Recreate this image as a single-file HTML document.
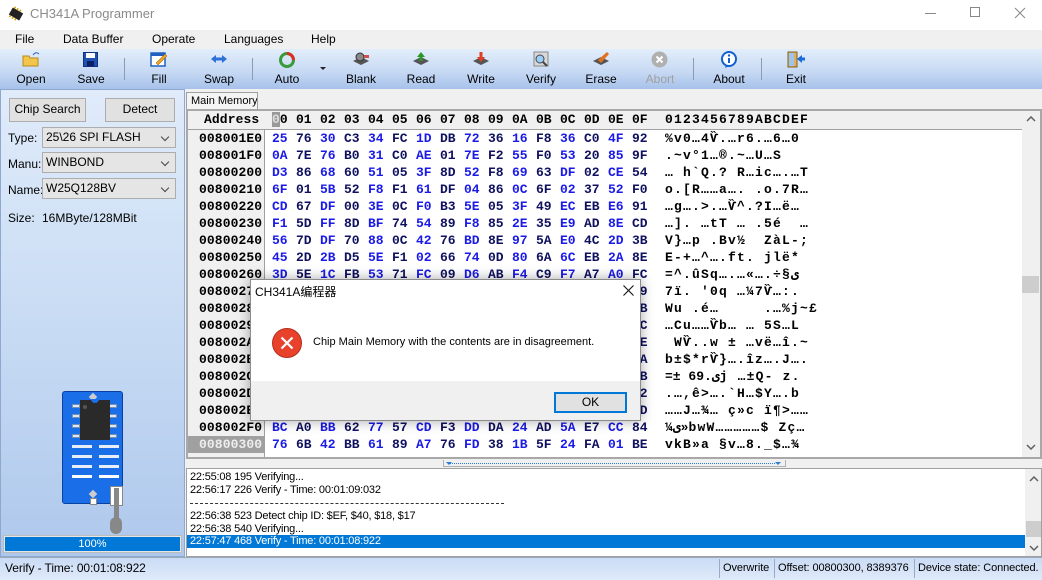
<!DOCTYPE html>
<html><head><meta charset="utf-8"><style>
*{box-sizing:border-box;margin:0;padding:0}
body{width:1042px;height:580px;overflow:hidden;position:relative;background:#f0f0f0;font-family:"Liberation Sans","Noto Sans CJK SC",sans-serif;font-size:12px;color:#000}
.a{position:absolute;white-space:nowrap}
.tb{text-align:center;width:60px;font-size:12px}
.sep{position:absolute;top:58px;width:1px;height:22px;background:#8a9bb5}
.mono{font-family:"Liberation Mono",monospace;font-weight:bold;font-size:13px}
.row{position:absolute;left:186px;height:17px;line-height:17px;white-space:pre}
.ad{position:absolute;left:13px;width:66px;letter-spacing:0.1px}
.hx{position:absolute;left:86px}
.hx span{display:inline-block;width:24px}
.b{color:#1a1ae8}.d{color:#101060}
.as{position:absolute;left:479px;letter-spacing:1.2px;color:#000}
.combo{position:absolute;left:42px;width:134px;height:21px;background:#e5e5e5;border:1px solid #adadad;padding-left:3px;line-height:19px;font-size:12px}
.combo:after{content:"";position:absolute;right:7px;top:6px;width:5px;height:5px;border-right:1px solid #444;border-bottom:1px solid #444;transform:rotate(45deg)}
.btn{position:absolute;background:#e1e1e1;border:1px solid #adadad;text-align:center;line-height:21px;font-size:12px}
.pin{position:absolute;width:8px;height:4px;background:#dfe8f5;border:1px solid #7890b0}
.slot{position:absolute;width:20px;height:3px;background:#e8eef8}
.log{position:absolute;left:190px;font-size:11px;line-height:13px;letter-spacing:-0.2px;white-space:nowrap}
.st{font-size:11px;letter-spacing:-0.1px}
</style></head><body>
<div class="a" style="left:0;top:0;width:1042px;height:30px;background:#fff"></div>
<svg class="a" style="left:7px;top:6px" width="18" height="16"><g transform="rotate(30 9 8)"><rect x="3" y="4" width="12" height="8" fill="#222"/><g stroke="#c9a400" stroke-width="1.5"><line x1="5" y1="2" x2="5" y2="4"/><line x1="8" y1="2" x2="8" y2="4"/><line x1="11" y1="2" x2="11" y2="4"/><line x1="5" y1="12" x2="5" y2="14"/><line x1="8" y1="12" x2="8" y2="14"/><line x1="11" y1="12" x2="11" y2="14"/></g></g></svg>
<div class="a" style="left:30px;top:6px;font-size:13px;color:#8a8a8a">CH341A Programmer</div>
<div class="a" style="left:925px;top:13px;width:11px;height:1px;background:#888"></div>
<div class="a" style="left:970px;top:7px;width:10px;height:10px;border:1px solid #888"></div>
<svg class="a" style="left:1014px;top:7px" width="12" height="12"><path d="M1 1L11 11M11 1L1 11" stroke="#888" stroke-width="1"/></svg>
<div class="a" style="left:0;top:30px;width:1042px;height:18px;background:#f0f0f0"></div>
<div class="a" style="left:15px;top:32px">File</div>
<div class="a" style="left:63px;top:32px">Data Buffer</div>
<div class="a" style="left:152px;top:32px">Operate</div>
<div class="a" style="left:224px;top:32px">Languages</div>
<div class="a" style="left:311px;top:32px">Help</div>
<div class="a" style="left:0;top:49px;width:1042px;height:40px;background:linear-gradient(#e3eefb,#c5d8f3 60%,#a6c1ea)"></div>
<div class="sep" style="left:124px"></div><div class="sep" style="left:252px"></div><div class="sep" style="left:693px"></div><div class="sep" style="left:761px"></div>
<svg class="a" style="left:22px;top:51px" width="18" height="16"><path d="M1 5h6l1 2h8v8H1z" fill="#f3c54a" stroke="#b48a1a"/><path d="M11 4q3-4 6-1" stroke="#3060c0" fill="none"/></svg>
<svg class="a" style="left:83px;top:52px" width="15" height="15"><rect x="0.5" y="0.5" width="14" height="14" fill="#2050b0" stroke="#103080"/><rect x="3" y="1" width="9" height="5" fill="#fff"/><rect x="4" y="9" width="7" height="5" fill="#0a1f60"/></svg>
<svg class="a" style="left:150px;top:51px" width="18" height="16"><rect x="1" y="2" width="14" height="13" fill="#fff" stroke="#2060c0" stroke-width="1.5"/><rect x="1" y="2" width="14" height="3" fill="#2060c0"/><path d="M6 12l9-9 2 2-9 9z" fill="#f0a020" stroke="#805010" stroke-width=".5"/></svg>
<svg class="a" style="left:210px;top:54px" width="18" height="10"><path d="M1 5l5-4v2.5h6V1l5 4-5 4V6.5H6V9z" fill="#2f6fd8"/></svg>
<svg class="a" style="left:278px;top:51px" width="18" height="17"><circle cx="9" cy="9" r="6.5" fill="none" stroke="#3a9a3a" stroke-width="3"/><path d="M9 2.5a6.5 6.5 0 0 1 6.5 6.5" stroke="#d83020" stroke-width="3" fill="none"/></svg>
<div class="a" style="left:320px;top:67px;width:0;height:0;border-left:3px solid transparent;border-right:3px solid transparent;border-top:3px solid #222"></div>
<svg class="a" style="left:352px;top:51px" width="18" height="17"><path d="M1 10l8-4 8 4-8 4z" fill="#555"/><circle cx="8" cy="6" r="4" fill="#888" stroke="#333"/><rect x="12" y="4" width="5" height="3" fill="#d05050"/></svg>
<svg class="a" style="left:412px;top:51px" width="18" height="17"><path d="M1 10l8-4 8 4-8 4z" fill="#555"/><path d="M9 1l4 5h-2.5v4h-3V6H5z" fill="#2a9a2a"/></svg>
<svg class="a" style="left:472px;top:51px" width="18" height="17"><path d="M1 10l8-4 8 4-8 4z" fill="#555"/><path d="M9 11l4-5h-2.5V1h-3v5H5z" fill="#e04020"/></svg>
<svg class="a" style="left:532px;top:51px" width="18" height="17"><rect x="2" y="1" width="14" height="14" fill="#d8d8d8" stroke="#888"/><circle cx="8" cy="8" r="4" fill="#9cd0f0" stroke="#446"/><path d="M11 11l4 4" stroke="#444" stroke-width="2"/></svg>
<svg class="a" style="left:592px;top:51px" width="18" height="17"><path d="M1 10l8-4 8 4-8 4z" fill="#555"/><path d="M6 9l9-8 2 2-8 9z" fill="#e07020"/></svg>
<svg class="a" style="left:651px;top:51px" width="17" height="17"><circle cx="8.5" cy="8.5" r="8" fill="#b0b0b0"/><path d="M5.5 5.5l6 6M11.5 5.5l-6 6" stroke="#fff" stroke-width="2"/></svg>
<svg class="a" style="left:720px;top:51px" width="18" height="17"><circle cx="9" cy="8" r="7" fill="#fff" stroke="#1060d0" stroke-width="2"/><path d="M6 14l-1 3 4-2" fill="#1060d0"/><rect x="8" y="7" width="2" height="5" fill="#1060d0"/><circle cx="9" cy="4.5" r="1.2" fill="#1060d0"/></svg>
<svg class="a" style="left:787px;top:51px" width="18" height="17"><rect x="1" y="1" width="9" height="15" fill="#e0b060" stroke="#806020"/><rect x="2" y="2" width="5" height="13" fill="#9cc4ec"/><path d="M10 8l5-4v2.5h3v3h-3V12z" fill="#1a6ad8"/></svg>
<div class="a tb" style="left:1px;top:72px">Open</div>
<div class="a tb" style="left:61px;top:72px">Save</div>
<div class="a tb" style="left:129px;top:72px">Fill</div>
<div class="a tb" style="left:189px;top:72px">Swap</div>
<div class="a tb" style="left:257px;top:72px">Auto</div>
<div class="a tb" style="left:331px;top:72px">Blank</div>
<div class="a tb" style="left:391px;top:72px">Read</div>
<div class="a tb" style="left:451px;top:72px">Write</div>
<div class="a tb" style="left:511px;top:72px">Verify</div>
<div class="a tb" style="left:571px;top:72px">Erase</div>
<div class="a tb" style="left:630px;top:72px;color:#a0a0a0">Abort</div>
<div class="a tb" style="left:699px;top:72px">About</div>
<div class="a tb" style="left:766px;top:72px">Exit</div>
<div class="a" style="left:0;top:89px;width:185px;height:468px;background:linear-gradient(#e0ebfa,#cddff5 40%,#aec8ec);border:1px solid #8fa8cf"></div>
<div class="btn" style="left:9px;top:98px;width:77px;height:24px">Chip Search</div>
<div class="btn" style="left:105px;top:98px;width:70px;height:24px">Detect</div>
<div class="a" style="left:8px;top:131px">Type:</div>
<div class="combo" style="top:127px">25\26 SPI FLASH</div>
<div class="a" style="left:8px;top:157px">Manu:</div>
<div class="combo" style="top:152px">WINBOND</div>
<div class="a" style="left:8px;top:183px">Name:</div>
<div class="combo" style="top:178px">W25Q128BV</div>
<div class="a" style="left:8px;top:211px">Size:</div>
<div class="a" style="left:42px;top:211px">16MByte/128MBit</div>
<div class="a" style="left:62px;top:391px;width:61px;height:113px;background:#1a6ee8;border:1px solid #0a40a0;border-radius:3px"></div>
<div class="a" style="left:90px;top:394px;width:6px;height:6px;background:#ccc;transform:rotate(45deg)"></div>
<div class="a" style="left:90px;top:491px;width:6px;height:6px;background:#ccc;transform:rotate(45deg)"></div>
<div class="pin" style="left:72px;top:404px"></div><div class="pin" style="left:72px;top:414px"></div><div class="pin" style="left:72px;top:424px"></div><div class="pin" style="left:72px;top:434px"></div>
<div class="pin" style="left:109px;top:404px"></div><div class="pin" style="left:109px;top:414px"></div><div class="pin" style="left:109px;top:424px"></div><div class="pin" style="left:109px;top:434px"></div>
<div class="a" style="left:80px;top:400px;width:30px;height:40px;background:#2a2a2a"></div>
<div class="a" style="left:91px;top:399px;width:8px;height:4px;background:#1a6ee8;border-radius:0 0 4px 4px"></div>
<div class="a" style="left:83px;top:405px;width:4px;height:4px;border-radius:2px;background:#555"></div>
<div class="slot" style="left:72px;top:445px"></div><div class="slot" style="left:99px;top:445px"></div>
<div class="slot" style="left:72px;top:455px"></div><div class="slot" style="left:99px;top:455px"></div>
<div class="slot" style="left:72px;top:465px"></div><div class="slot" style="left:99px;top:465px"></div>
<div class="slot" style="left:72px;top:475px;background:#fff"></div><div class="slot" style="left:99px;top:475px;background:#fff"></div>
<div class="a" style="left:90px;top:498px;width:7px;height:7px;background:#fff;border:1px solid #888"></div>
<div class="a" style="left:110px;top:486px;width:13px;height:20px;background:#fff;border:1px solid #888"></div>
<div class="a" style="left:114px;top:488px;width:5px;height:35px;background:#888"></div>
<div class="a" style="left:110px;top:517px;width:12px;height:17px;background:#888;border-radius:6px"></div>
<div class="a" style="left:3px;top:535px;width:179px;height:18px;background:#e6e6e6;border:1px solid #bcbcbc"></div>
<div class="a" style="left:5px;top:537px;width:175px;height:14px;background:#0078d7;color:#fff;text-align:center;line-height:14px;font-size:11px">100%</div>
<div class="a" style="left:186px;top:92px;width:72px;height:18px;background:#f4f4f4;border:1px solid #a0a0a0;border-bottom:none;font-size:11px;padding:2px 4px;overflow:hidden">Main Memory</div>
<div class="a" style="left:186px;top:109px;width:856px;height:350px;background:#fff;border:2px solid #a8a8a8"></div>
<div class="a" style="left:188px;top:111px;width:834px;height:19px;background:#f0f0f0;border-bottom:1px solid #a0a0a0"></div>
<div class="a" style="left:188px;top:130px;width:77px;height:327px;background:#f0f0f0;border-right:1px solid #a0a0a0"></div>
<div class="a" style="left:1022px;top:111px;width:18px;height:346px;background:#f0f0f0"></div>
<div class="a" style="left:1022px;top:276px;width:17px;height:17px;background:#cdcdcd"></div>
<svg class="a" style="left:1026px;top:116px" width="10" height="6"><path d="M1 5l4-4 4 4" stroke="#606060" fill="none" stroke-width="1.5"/></svg>
<svg class="a" style="left:1026px;top:444px" width="10" height="6"><path d="M1 1l4 4 4-4" stroke="#606060" fill="none" stroke-width="1.5"/></svg>
<div class="mono" style="position:absolute;left:0;top:0">
<div class="row" style="top:111px"><span class="ad" style="left:18px">Address</span><span class="hx"><span style="color:#000"><b style="background:#999;color:#ddd">0</b>0</span><span>01</span><span>02</span><span>03</span><span>04</span><span>05</span><span>06</span><span>07</span><span>08</span><span>09</span><span>0A</span><span>0B</span><span>0C</span><span>0D</span><span>0E</span><span>0F</span></span><span class="as">0123456789ABCDEF</span></div>
<div class="row" style="top:130px"><span class="ad">008001E0</span><span class="hx"><span class="b">25</span><span class="d">76</span><span class="b">30</span><span class="d">C3</span><span class="b">34</span><span class="d">FC</span><span class="b">1D</span><span class="d">DB</span><span class="b">72</span><span class="d">36</span><span class="b">16</span><span class="d">F8</span><span class="b">36</span><span class="d">C0</span><span class="b">4F</span><span class="d">92</span></span><span class="as">%v0…4Ѷ.…r6.…6…0</span></div>
<div class="row" style="top:147px"><span class="ad">008001F0</span><span class="hx"><span class="b">0A</span><span class="d">7E</span><span class="b">76</span><span class="d">B0</span><span class="b">31</span><span class="d">C0</span><span class="b">AE</span><span class="d">01</span><span class="b">7E</span><span class="d">F2</span><span class="b">55</span><span class="d">F0</span><span class="b">53</span><span class="d">20</span><span class="b">85</span><span class="d">9F</span></span><span class="as">.~v°1…®.~…U…S</span></div>
<div class="row" style="top:164px"><span class="ad">00800200</span><span class="hx"><span class="b">D3</span><span class="d">86</span><span class="b">68</span><span class="d">60</span><span class="b">51</span><span class="d">05</span><span class="b">3F</span><span class="d">8D</span><span class="b">52</span><span class="d">F8</span><span class="b">69</span><span class="d">63</span><span class="b">DF</span><span class="d">02</span><span class="b">CE</span><span class="d">54</span></span><span class="as">… h`Q.? R…ic….…T</span></div>
<div class="row" style="top:181px"><span class="ad">00800210</span><span class="hx"><span class="b">6F</span><span class="d">01</span><span class="b">5B</span><span class="d">52</span><span class="b">F8</span><span class="d">F1</span><span class="b">61</span><span class="d">DF</span><span class="b">04</span><span class="d">86</span><span class="b">0C</span><span class="d">6F</span><span class="b">02</span><span class="d">37</span><span class="b">52</span><span class="d">F0</span></span><span class="as">o.[R……a…. .o.7R…</span></div>
<div class="row" style="top:198px"><span class="ad">00800220</span><span class="hx"><span class="b">CD</span><span class="d">67</span><span class="b">DF</span><span class="d">00</span><span class="b">3E</span><span class="d">0C</span><span class="b">F0</span><span class="d">B3</span><span class="b">5E</span><span class="d">05</span><span class="b">3F</span><span class="d">49</span><span class="b">EC</span><span class="d">EB</span><span class="b">E6</span><span class="d">91</span></span><span class="as">…g….>.…Ѷ^.?I…ë…</span></div>
<div class="row" style="top:215px"><span class="ad">00800230</span><span class="hx"><span class="b">F1</span><span class="d">5D</span><span class="b">FF</span><span class="d">8D</span><span class="b">BF</span><span class="d">74</span><span class="b">54</span><span class="d">89</span><span class="b">F8</span><span class="d">85</span><span class="b">2E</span><span class="d">35</span><span class="b">E9</span><span class="d">AD</span><span class="b">8E</span><span class="d">CD</span></span><span class="as">…]. …tT … .5é  …</span></div>
<div class="row" style="top:232px"><span class="ad">00800240</span><span class="hx"><span class="b">56</span><span class="d">7D</span><span class="b">DF</span><span class="d">70</span><span class="b">88</span><span class="d">0C</span><span class="b">42</span><span class="d">76</span><span class="b">BD</span><span class="d">8E</span><span class="b">97</span><span class="d">5A</span><span class="b">E0</span><span class="d">4C</span><span class="b">2D</span><span class="d">3B</span></span><span class="as">V}…p .Bv½  ZàL-;</span></div>
<div class="row" style="top:249px"><span class="ad">00800250</span><span class="hx"><span class="b">45</span><span class="d">2D</span><span class="b">2B</span><span class="d">D5</span><span class="b">5E</span><span class="d">F1</span><span class="b">02</span><span class="d">66</span><span class="b">74</span><span class="d">0D</span><span class="b">80</span><span class="d">6A</span><span class="b">6C</span><span class="d">EB</span><span class="b">2A</span><span class="d">8E</span></span><span class="as">E-+…^….ft. jlë*</span></div>
<div class="row" style="top:266px"><span class="ad">00800260</span><span class="hx"><span class="b">3D</span><span class="d">5E</span><span class="b">1C</span><span class="d">FB</span><span class="b">53</span><span class="d">71</span><span class="b">FC</span><span class="d">09</span><span class="b">D6</span><span class="d">AB</span><span class="b">F4</span><span class="d">C9</span><span class="b">F7</span><span class="d">A7</span><span class="b">A0</span><span class="d">FC</span></span><span class="as">=^.ûSq….…«….÷§ی</span></div>
<div class="row" style="top:283px"><span class="ad">00800270</span><span class="hx"><span class="b">37</span><span class="d">EF</span><span class="b">0A</span><span class="d">60</span><span class="b">30</span><span class="d">71</span><span class="b">20</span><span class="d">85</span><span class="b">BC</span><span class="d">37</span><span class="b">85</span><span class="d">81</span><span class="b">3A</span><span class="d">2E</span><span class="b">20</span><span class="d">09</span></span><span class="as">7ï. '0q …¼7Ѷ…:.</span></div>
<div class="row" style="top:300px"><span class="ad">00800280</span><span class="hx"><span class="b">57</span><span class="d">75</span><span class="b">20</span><span class="d">2E</span><span class="b">E9</span><span class="d">20</span><span class="b">85</span><span class="d">20</span><span class="b">20</span><span class="d">2E</span><span class="b">85</span><span class="d">25</span><span class="b">6A</span><span class="d">7E</span><span class="b">A3</span><span class="d">0B</span></span><span class="as">Wu .é…     .…%j~£</span></div>
<div class="row" style="top:317px"><span class="ad">00800290</span><span class="hx"><span class="b">85</span><span class="d">43</span><span class="b">75</span><span class="d">85</span><span class="b">85</span><span class="d">85</span><span class="b">85</span><span class="d">62</span><span class="b">85</span><span class="d">20</span><span class="b">85</span><span class="d">20</span><span class="b">35</span><span class="d">53</span><span class="b">85</span><span class="d">0C</span></span><span class="as">…Cu……Ѷb… … 5S…L</span></div>
<div class="row" style="top:334px"><span class="ad">008002A0</span><span class="hx"><span class="b">20</span><span class="d">57</span><span class="b">2E</span><span class="d">2E</span><span class="b">77</span><span class="d">20</span><span class="b">B1</span><span class="d">20</span><span class="b">85</span><span class="d">76</span><span class="b">EB</span><span class="d">85</span><span class="b">EE</span><span class="d">2E</span><span class="b">7E</span><span class="d">0E</span></span><span class="as"> WѶ..w ± …vë…î.~</span></div>
<div class="row" style="top:351px"><span class="ad">008002B0</span><span class="hx"><span class="b">62</span><span class="d">B1</span><span class="b">24</span><span class="d">2A</span><span class="b">72</span><span class="d">20</span><span class="b">7D</span><span class="d">85</span><span class="b">2E</span><span class="d">EE</span><span class="b">7A</span><span class="d">85</span><span class="b">2E</span><span class="d">4A</span><span class="b">85</span><span class="d">0A</span></span><span class="as">b±$*rѶ}….îz….J….</span></div>
<div class="row" style="top:368px"><span class="ad">008002C0</span><span class="hx"><span class="b">3D</span><span class="d">B1</span><span class="b">20</span><span class="d">20</span><span class="b">2E</span><span class="d">36</span><span class="b">39</span><span class="d">6A</span><span class="b">20</span><span class="d">85</span><span class="b">B1</span><span class="d">51</span><span class="b">2D</span><span class="d">20</span><span class="b">7A</span><span class="d">0B</span></span><span class="as">=± ی.69j …±Q- z.</span></div>
<div class="row" style="top:385px"><span class="ad">008002D0</span><span class="hx"><span class="b">2E</span><span class="d">85</span><span class="b">2C</span><span class="d">EA</span><span class="b">3E</span><span class="d">85</span><span class="b">2E</span><span class="d">60</span><span class="b">48</span><span class="d">85</span><span class="b">24</span><span class="d">59</span><span class="b">85</span><span class="d">2E</span><span class="b">62</span><span class="d">02</span></span><span class="as">.…,ê>….`H…$Y….b</span></div>
<div class="row" style="top:402px"><span class="ad">008002E0</span><span class="hx"><span class="b">85</span><span class="d">85</span><span class="b">4A</span><span class="d">85</span><span class="b">BE</span><span class="d">85</span><span class="b">20</span><span class="d">E7</span><span class="b">BB</span><span class="d">63</span><span class="b">20</span><span class="d">EF</span><span class="b">B6</span><span class="d">3E</span><span class="b">85</span><span class="d">0D</span></span><span class="as">……J…¾… ç»c ï¶>……</span></div>
<div class="row" style="top:419px"><span class="ad">008002F0</span><span class="hx"><span class="b">BC</span><span class="d">A0</span><span class="b">BB</span><span class="d">62</span><span class="b">77</span><span class="d">57</span><span class="b">CD</span><span class="d">F3</span><span class="b">DD</span><span class="d">DA</span><span class="b">24</span><span class="d">AD</span><span class="b">5A</span><span class="d">E7</span><span class="b">CC</span><span class="d">84</span></span><span class="as">¼ی»bwW……………$ Zç…</span></div>
<div class="row" style="top:436px"><span class="ad" style="left:2px;width:77px;padding-left:11px;background:#a0a0a0;color:#eee">00800300</span><span class="hx"><span class="b">76</span><span class="d">6B</span><span class="b">42</span><span class="d">BB</span><span class="b">61</span><span class="d">89</span><span class="b">A7</span><span class="d">76</span><span class="b">FD</span><span class="d">38</span><span class="b">1B</span><span class="d">5F</span><span class="b">24</span><span class="d">FA</span><span class="b">01</span><span class="d">BE</span></span><span class="as">vkB»a §v…8._$…¾</span></div>
</div>
<div class="a" style="left:186px;top:459px;width:856px;height:9px;background:#f0f0f0"></div>
<div class="a" style="left:443px;top:460px;width:343px;height:7px;border:1px solid #b0b0b0;border-top:none"></div>
<div class="a" style="left:450px;top:463px;width:325px;height:0;border-top:1px dotted #2a7ad8"></div>
<div class="a" style="left:446px;top:462px;border-left:3px solid transparent;border-right:3px solid transparent;border-top:3px solid #2a7ad8"></div>
<div class="a" style="left:775px;top:462px;border-left:3px solid transparent;border-right:3px solid transparent;border-top:3px solid #2a7ad8"></div>
<div class="a" style="left:186px;top:468px;width:856px;height:89px;background:#fff;border:1px solid #a0a0a0"></div>
<div class="a" style="left:1025px;top:469px;width:16px;height:87px;background:#f0f0f0"></div>
<div class="a" style="left:1026px;top:521px;width:15px;height:16px;background:#cdcdcd"></div>
<svg class="a" style="left:1029px;top:476px" width="10" height="6"><path d="M1 5l4-4 4 4" stroke="#606060" fill="none" stroke-width="1.5"/></svg>
<svg class="a" style="left:1029px;top:545px" width="10" height="6"><path d="M1 1l4 4 4-4" stroke="#606060" fill="none" stroke-width="1.5"/></svg>
<div class="log" style="top:471px">22:55:08 195 Verifying...</div>
<div class="log" style="top:484px">22:56:17 226 Verify - Time: 00:01:09:032</div>
<div class="a" style="left:190px;top:503px;width:314px;border-top:1px dashed #333"></div>
<div class="log" style="top:510px">22:56:38 523 Detect chip ID: $EF, $40, $18, $17</div>
<div class="log" style="top:523px">22:56:38 540 Verifying...</div>
<div class="a" style="left:187px;top:535px;width:838px;height:13px;background:#0078d7"></div>
<div class="log" style="top:535px;color:#fff">22:57:47 468 Verify - Time: 00:01:08:922</div>
<div class="a" style="left:0;top:557px;width:1042px;height:23px;background:linear-gradient(#c9dbf4,#dfeafa);border-top:1px solid #9ab"></div>
<div class="a st" style="left:5px;top:561px;font-size:12px">Verify - Time: 00:01:08:922</div>
<div class="a" style="left:719px;top:559px;width:1px;height:19px;background:#99aac8"></div>
<div class="a" style="left:774px;top:559px;width:1px;height:19px;background:#99aac8"></div>
<div class="a" style="left:914px;top:559px;width:1px;height:19px;background:#99aac8"></div>
<div class="a st" style="left:723px;top:562px">Overwrite</div>
<div class="a st" style="left:778px;top:562px">Offset: 00800300, 8389376</div>
<div class="a st" style="left:918px;top:562px">Device state: Connected.</div>
<div class="a" style="left:250px;top:279px;width:391px;height:142px;background:#fff;border:1px solid #8c8c8c;box-shadow:0 0 12px rgba(0,0,0,.35)"></div>
<div class="a" style="left:255px;top:283px;font-size:12px">CH341A编程器</div>
<svg class="a" style="left:623px;top:285px" width="11" height="11"><path d="M.5.5l10 10M10.5.5l-10 10" stroke="#111" stroke-width="1.1"/></svg>
<div class="a" style="left:251px;top:381px;width:389px;height:39px;background:#f0f0f0"></div>
<svg class="a" style="left:272px;top:328px" width="30" height="30"><circle cx="15" cy="15" r="14.5" fill="#e8412c"/><circle cx="15" cy="15" r="14.5" fill="none" stroke="#b52d1c" stroke-width="1"/><path d="M9.5 9.5l11 11M20.5 9.5l-11 11" stroke="#fff" stroke-width="2.2"/></svg>
<div class="a" style="left:313px;top:336px;font-size:11px;color:#000">Chip Main Memory with the contents are in disagreement.</div>
<div class="a" style="left:554px;top:392px;width:73px;height:21px;background:#e1e1e1;border:2px solid #0078d7;text-align:center;line-height:17px;font-size:12px">OK</div>
</body></html>
